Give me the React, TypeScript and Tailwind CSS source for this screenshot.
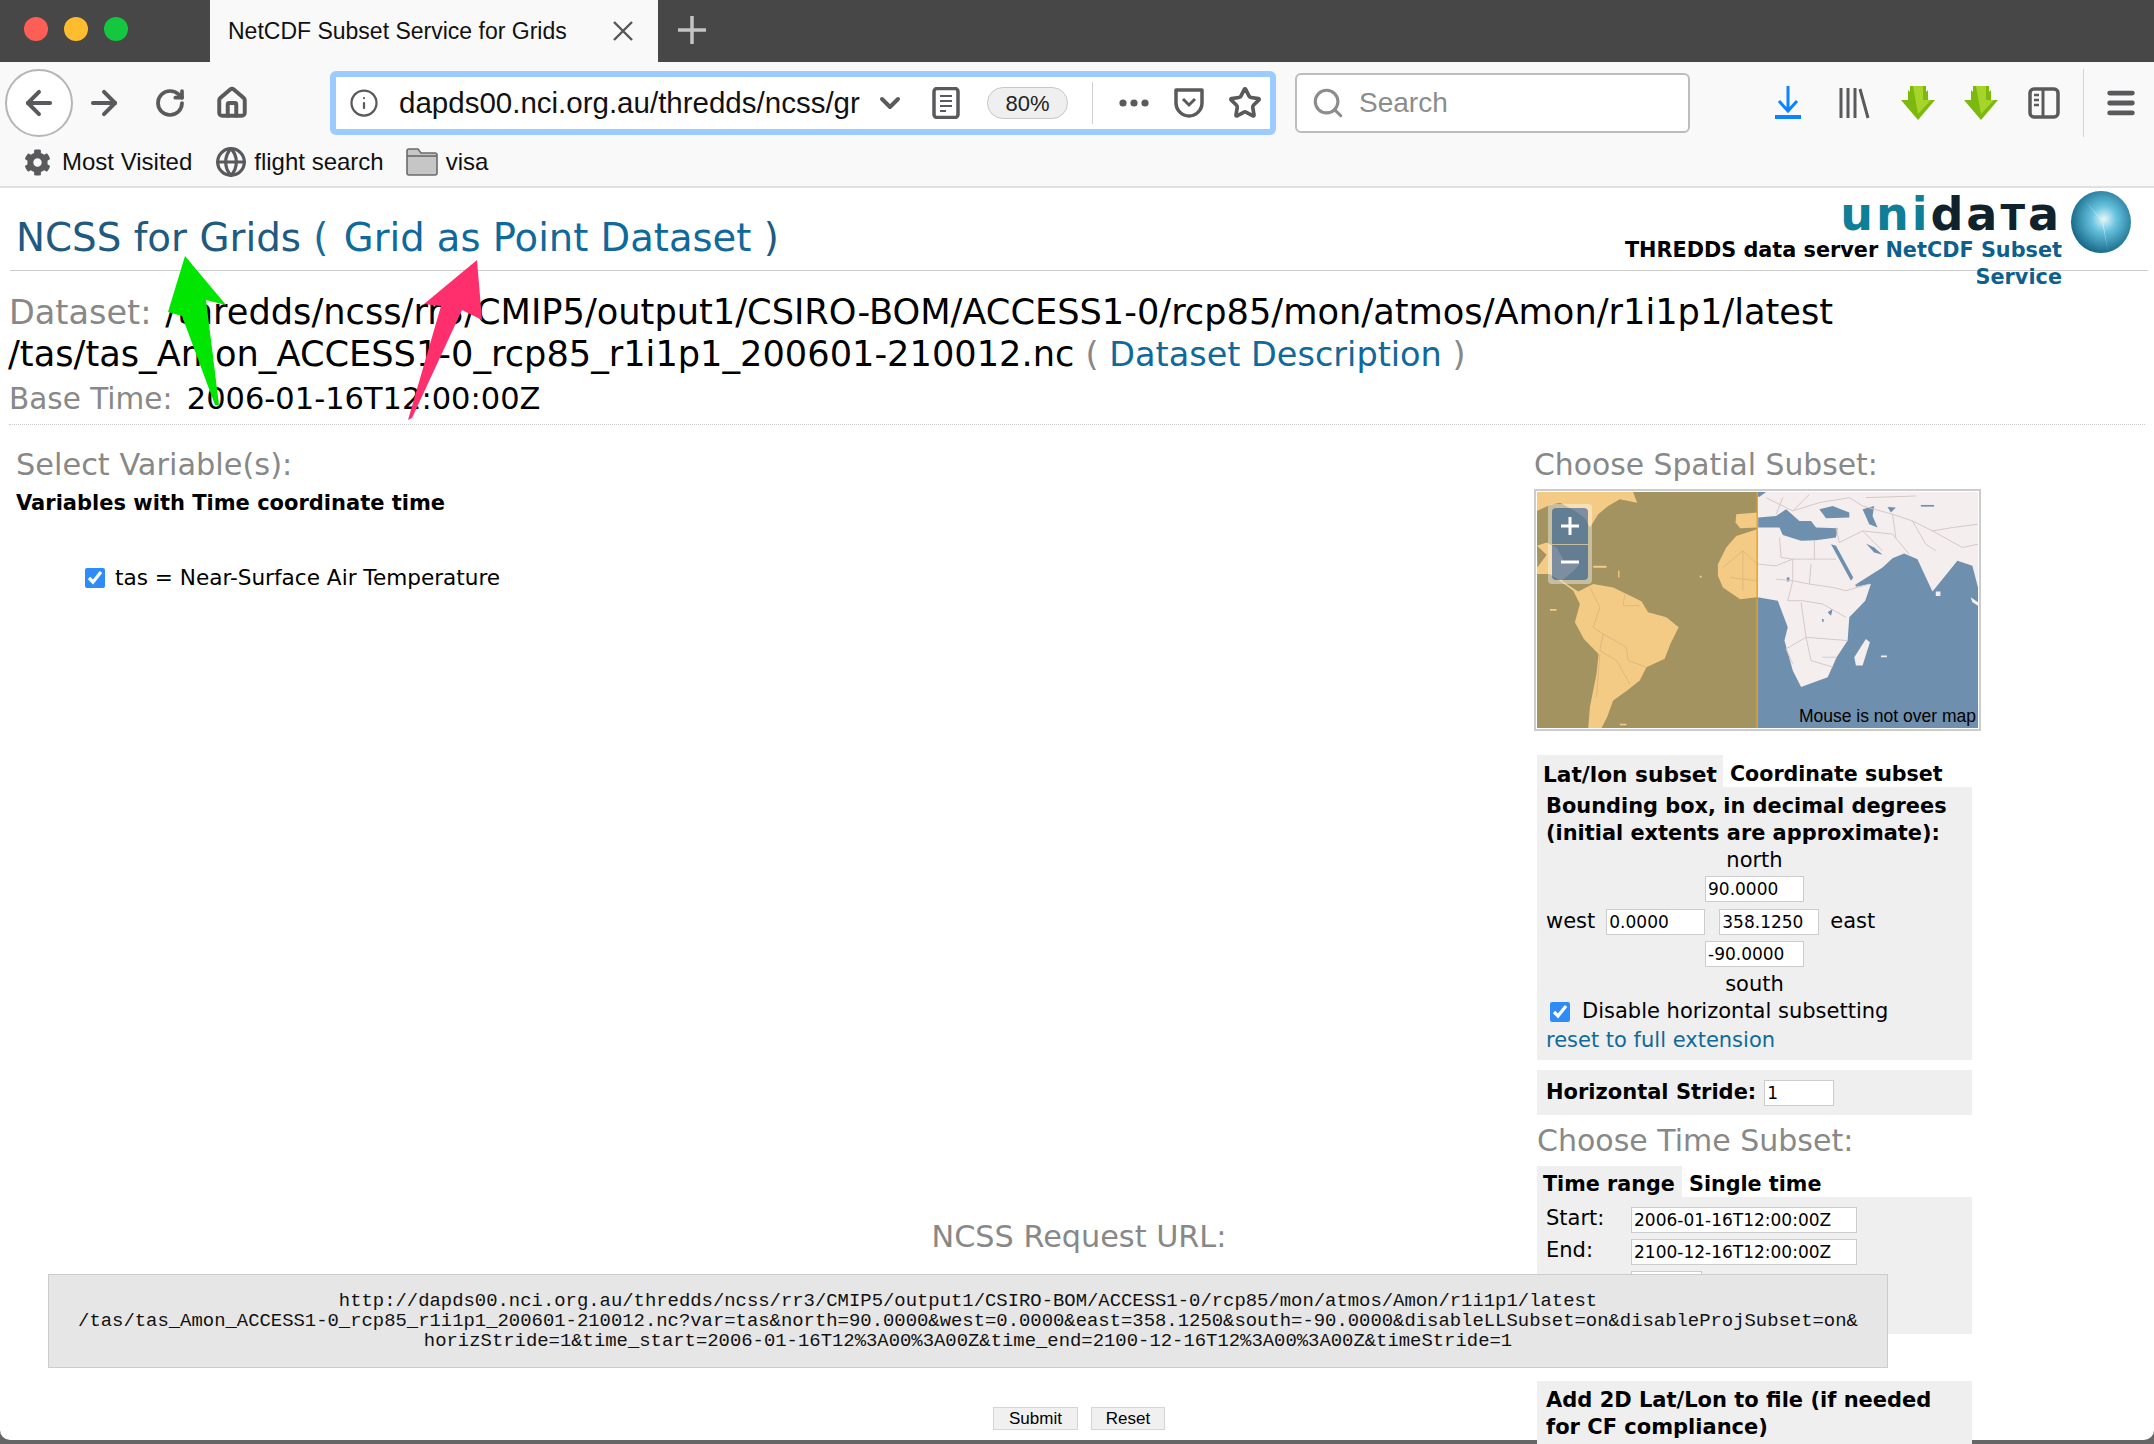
import React from "react";
import { ArrowLeft, ArrowRight, RotateCw, Home, Info, ChevronDown, Star, Search, Menu, Globe } from "lucide-react";
import { FaCog } from "react-icons/fa";

const GreenArrow = () => (
  <svg className="h-[34px] w-[36px]" viewBox="0 0 36 34">
    <path d="M10 0h16v6l2-2v10h7L18 34 1 14h7V4l2 2z" fill="#7cb80e" />
    <path d="M13 0h10v14h8L18 28z" fill="#a6d42a" />
  </svg>
);

const MapPicture = () => (
  <svg className="h-full w-full" viewBox="111 183 1326 710" preserveAspectRatio="none">
    <rect x="111" y="183" width="663" height="710" fill="#a29360" />
    <rect x="774" y="183" width="663" height="710" fill="#6f8fae" />
    {/* americas + west africa, dimmed half */}
    <g fill="#f4cb85">
      <path d="M111 183H400L412 215L360 205L325 225L295 250L270 290L255 262L225 240L180 215L150 222L111 240Z" />
      <path d="M111 345L140 335L170 350L195 395L240 398L222 420L185 450L235 482L280 460L340 470L385 492L425 512L445 545L500 560L537 590L512 640L495 685L440 710L420 750L382 780L340 810L322 860L305 893H265L270 830L290 730L296 670L252 625L225 575L240 520L220 480L180 450L150 430H111Z" />
      <path d="M710 250L773 245V290L722 292L708 275Z" />
      <path d="M655 400L680 350L710 315L773 295V500L722 506L670 470L655 435Z" />
      <path d="M280 405h40v6h-40zM600 435h6v5h-6zM355 420h4v20h-4zM150 535h20v5h-20z" />
      <path d="M111 345L140 372L112 410Z" fill="#a29360" />
      <path d="M360 880h20v5h-20z" />
    </g>
    <g fill="none" stroke="#e0b87c" strokeWidth="3">
      <path d="M270 470L300 530L280 590L310 610L380 650L385 690L440 710M310 610L300 660L350 690L390 760M375 490L370 525L420 525M670 410L730 360L773 400M690 440L773 450M730 360V480M300 670L290 800" />
    </g>
    {/* europe, africa, asia */}
    <path
      d="M774 183H1437V470L1420 405L1375 390L1310 470L1300 482L1255 385L1215 368L1180 382L1150 410L1068 462L1115 460L1098 510L1050 560L1045 630L1012 680L985 740L905 770L880 720L855 630L865 590L835 510L774 500Z"
      fill="#f5eeee"
    />
    <path d="M1065 680L1100 625L1112 635L1090 705L1070 705Z" fill="#f5eeee" />
    <path d="M1415 500L1437 515V525L1420 515ZM1310 482h14v14h-14zM1145 675h18v5h-18z" fill="#f5eeee" />
    <g fill="#6f8fae">
      <path d="M776 260L830 255L860 235L900 270L935 270L950 290L1015 292L1010 320L950 328L905 330L850 312L840 290L776 290Z" />
      <path d="M960 235L1000 225L1050 245L1050 260L980 262Z" />
      <path d="M1090 235L1125 225L1120 255L1135 290L1110 280Z" />
      <path d="M1165 228L1190 230L1175 245Z" />
      <path d="M995 340L1010 345L1062 440L1055 450Z" />
      <path d="M1100 338L1125 350L1150 372L1125 365Z" />
      <path d="M1068 462L1115 455L1112 460L1070 468Z" />
      <path d="M985 545L1000 535L995 555ZM968 565h5v8h-5z" />
      <path d="M1265 222H1305V227H1265Z" />
      <path d="M774 183H800L780 197H774Z" />
      <path d="M862 440h8v12h-8z" />
    </g>
    <g fill="none" stroke="#d6c8c8" strokeWidth="3">
      <path d="M840 320L845 380L880 385L945 385L1010 385M945 330V385M880 385V450L930 460L1000 470L1040 480L1110 460M930 460L935 400M774 400L830 405L880 385M830 445L880 450L865 510L910 510L970 520L1040 560M905 515L920 620L1045 630M920 620L860 655L880 700M970 680L1010 680M920 620L935 690L1000 710" />
      <path d="M800 200L880 240L960 215L1050 200L1090 225L1180 250L1240 270L1300 300L1390 350L1437 340M1020 335L1090 300L1180 310L1230 370M1180 250L1190 320M1240 270L1280 340L1310 360M1100 200L1250 195M1300 300L1360 290L1437 280M880 240L930 190M1020 335L1010 290M1090 300L1150 360M850 200L830 250" />
    </g>
    <rect x="771" y="183" width="4" height="710" fill="#e79f1a" />
  </svg>
);

const fieldBox = "h-[26px] border border-[#cccccc] bg-white px-[2px] text-[17px] leading-[24px] text-black";

const App = () => {
  return (
    <div className="relative h-[1444px] w-[2154px] overflow-hidden bg-[#666666] font-['Liberation_Sans',sans-serif]">
      {/* tab strip */}
      <div className="flex h-[62px] bg-[#474747]">
        <div className="flex w-[210px] items-center gap-[16px] pb-[4px] pl-[24px]">
          <span className="h-[24px] w-[24px] rounded-full bg-[#fd5f57]" />
          <span className="h-[24px] w-[24px] rounded-full bg-[#febc2e]" />
          <span className="h-[24px] w-[24px] rounded-full bg-[#14c73f]" />
        </div>
        <div className="flex w-[448px] items-center justify-between bg-[#f9f9fa] pl-[18px] pr-[24px] text-[23px] text-[#111111]">
          <span>NetCDF Subset Service for Grids</span>
          <svg className="h-[22px] w-[22px]" viewBox="0 0 22 22">
            <path d="M2 2l18 18M20 2L2 20" stroke="#555555" strokeWidth="2.4" />
          </svg>
        </div>
        <svg className="ml-[20px] mt-[16px] h-[28px] w-[28px]" viewBox="0 0 28 28">
          <path d="M14 0v28M0 14h28" stroke="#c4c4c4" strokeWidth="3.5" />
        </svg>
      </div>

      {/* toolbar */}
      <div className="flex h-[78px] items-center bg-[#f9f9fa] pt-[4px] text-[#5a5a5c]">
        <div className="ml-[5px] flex h-[68px] w-[68px] items-center justify-center rounded-full border-2 border-[#b5b5b5] bg-white">
          <ArrowLeft size={38} strokeWidth={2.5} />
        </div>
        <ArrowRight size={38} strokeWidth={2.5} className="ml-[12px]" />
        <RotateCw size={32} strokeWidth={2.8} className="ml-[31px]" />
        <Home size={34} strokeWidth={2.8} className="ml-[29px]" />
        <div className="ml-[81px] flex h-[64px] w-[946px] items-center rounded-[6px] border-[6px] border-[#9ccbff] bg-white">
          <Info size={30} strokeWidth={1.8} className="ml-[13px]" />
          <div className="ml-[20px] w-[461px] overflow-hidden whitespace-nowrap text-[29.5px] text-[#111111]">
            dapds00.nci.org.au/thredds/ncss/grid/CMIP5
          </div>
          <ChevronDown size={32} strokeWidth={3} className="ml-[14px]" />
          <svg className="ml-[26px] h-[32px] w-[28px]" viewBox="0 0 28 32">
            <rect x="2" y="1.5" width="24" height="29" rx="3" fill="none" stroke="#5a5a5c" strokeWidth="3.5" />
            <path d="M8 9h12M8 14h12M8 19h12M8 24h6" stroke="#5a5a5c" strokeWidth="2" />
          </svg>
          <div className="ml-[27px] flex h-[32px] w-[81px] items-center justify-center rounded-full border border-[#c8c8c8] bg-[#efefef] text-[22px] text-[#222222]">
            80%
          </div>
          <div className="ml-[24px] h-[42px] w-px bg-[#cfcfcf]" />
          <svg className="ml-[24px] h-[34px] w-[34px]" viewBox="0 0 34 34">
            <circle cx="6" cy="17" r="3.6" fill="#5a5a5c" />
            <circle cx="17" cy="17" r="3.6" fill="#5a5a5c" />
            <circle cx="28" cy="17" r="3.6" fill="#5a5a5c" />
          </svg>
          <svg className="ml-[22px] h-[32px] w-[32px]" viewBox="0 0 32 32">
            <path d="M3 3h26v13c0 7-6 13-13 13S3 23 3 16z" fill="none" stroke="#5a5a5c" strokeWidth="3.5" strokeLinejoin="round" />
            <path d="M10 12l6 6 6-6" fill="none" stroke="#5a5a5c" strokeWidth="3" />
          </svg>
          <Star size={34} strokeWidth={2.6} className="ml-[23px]" />
        </div>
        <div className="ml-[19px] flex h-[60px] w-[395px] items-center rounded-[6px] border-2 border-[#bdbdbd] bg-white text-[28px] text-[#8c8c8c]">
          <Search size={34} strokeWidth={2.2} className="ml-[14px]" />
          <span className="ml-[14px]">Search</span>
        </div>
        <svg className="ml-[85px] h-[34px] w-[26px]" viewBox="0 0 26 34">
          <path d="M13 0v25M4 15l9 10 9-10" fill="none" stroke="#0a84ff" strokeWidth="3" />
          <path d="M0 31h26" stroke="#0a84ff" strokeWidth="4" />
        </svg>
        <svg className="ml-[37px] h-[32px] w-[32px]" viewBox="0 0 32 32">
          <path d="M3 1v30M10 1v30M17 1v30M22 2l8 29" stroke="#5a5a5c" strokeWidth="3" />
        </svg>
        <div className="ml-[30px]">
          <GreenArrow />
        </div>
        <div className="ml-[27px]">
          <GreenArrow />
        </div>
        <svg className="ml-[29px] h-[32px] w-[32px]" viewBox="0 0 32 32">
          <rect x="2" y="2" width="28" height="28" rx="4" fill="none" stroke="#5a5a5c" strokeWidth="3.5" />
          <path d="M15 2v28" stroke="#5a5a5c" strokeWidth="3" />
          <path d="M6 8h5M6 13h5M6 18h5" stroke="#5a5a5c" strokeWidth="2.5" />
        </svg>
        <div className="ml-[23px] h-[68px] w-px bg-[#d4d4d4]" />
        <Menu size={34} strokeWidth={3.4} className="ml-[20px]" />
      </div>

      {/* bookmarks */}
      <div className="flex h-[48px] items-center border-b-2 border-[#e0e0e0] bg-[#f9f9fa] pb-[2px] pl-[24px] text-[24px] text-[#111111]">
        <FaCog size={27} className="text-[#5a5a5c]" />
        <span className="ml-[11px]">Most Visited</span>
        <Globe size={32} strokeWidth={2.4} className="ml-[23px] text-[#5a5a5c]" />
        <span className="ml-[7px]">flight search</span>
        <svg className="ml-[22px] h-[28px] w-[32px]" viewBox="0 0 32 28">
          <path d="M1 3a2 2 0 0 1 2-2h9l3 4h14a2 2 0 0 1 2 2v18a2 2 0 0 1-2 2H3a2 2 0 0 1-2-2z" fill="#c6c6c6" stroke="#6a6a6a" strokeWidth="1.6" />
          <path d="M1 8h30" stroke="#6a6a6a" strokeWidth="1.6" />
        </svg>
        <span className="ml-[8px]">visa</span>
      </div>

      {/* page */}
      <div className="relative h-[1252px] rounded-b-[10px] bg-white font-['DejaVu_Sans',sans-serif] text-black">
        {/* logo block sits over the rule */}
        <div className="absolute right-[22px] top-[2px] flex items-start gap-[8px]">
          <div className="flex w-[440px] flex-col items-end">
            <div className="mt-[-2px] h-[49px] whitespace-nowrap text-[46px] leading-[52px] tracking-[3px]">
              <span className="font-bold text-[#0f7e97]">uni</span>
              <span className="font-bold text-[#10222b]">
                da<span className="text-[36px] uppercase">t</span>a
              </span>
            </div>
            <div className="text-right text-[20.8px] font-bold leading-[27px]">
              THREDDS data server <span className="text-[#0f5f8c]">NetCDF Subset Service</span>
            </div>
          </div>
          <svg className="h-[64px] w-[62px]" viewBox="0 0 62 64">
            <defs>
              <radialGradient id="globe" cx="0.55" cy="0.45" r="0.6">
                <stop offset="0" stopColor="#e8f6fb" />
                <stop offset="0.35" stopColor="#66c2de" />
                <stop offset="1" stopColor="#0d5f80" />
              </radialGradient>
            </defs>
            <ellipse cx="31" cy="32" rx="30" ry="31" fill="url(#globe)" />
            <path d="M14 10L32 30L38 62L33 32Z" fill="#ffffff" opacity="0.8" />
          </svg>
        </div>

        <div className="ml-[10px] mr-[6px] border-b border-[#cccccc] pb-[6px] pl-[6px] pt-[24px] text-[38.8px] leading-[52px] text-[#215a80]">
          NCSS for Grids <span className="text-[#1c6b97]">( </span>
          <span className="ml-[3px] text-[38.5px] text-[#10699b]">Grid as Point Dataset</span> <span>)</span>
        </div>

        <div className="mx-[9px] mt-[20px] border-b border-dotted border-[#cccccc] pb-[2px] text-[35.2px] leading-[41px]">
          <div>
            <span className="mr-[3px] text-[33.5px] text-[#888888]">Dataset: </span>
            /thredds/ncss/rr3/CMIP5/output1/CSIRO-BOM/ACCESS1-0/rcp85/mon/atmos/Amon/r1i1p1/latest
          </div>
          <div className="ml-[-1px]">
            /tas/tas_Amon_ACCESS1-0_rcp85_r1i1p1_200601-210012.nc <span className="text-[33.5px] text-[#888888]">( </span>
            <span className="text-[33.5px] text-[#10699b]">Dataset Description</span>
            <span className="text-[33.5px] text-[#888888]"> )</span>
          </div>
          <div className="pt-px text-[30.5px] leading-[46px]">
            <span className="mr-[5px] text-[29.5px] text-[#888888]">Base Time: </span>2006-01-16T12:00:00Z
          </div>
        </div>

        <div className="flex">
          {/* left column */}
          <div className="w-[1534px] pl-[16px] pt-[21px]">
            <div className="text-[30.4px] leading-[38px] text-[#888888]">Select Variable(s):</div>
            <div className="mt-[4px] text-[21px] font-bold leading-[30px]">Variables with Time coordinate time</div>
            <label className="ml-[69px] mt-[45px] flex items-center gap-[10px] text-[21.6px] leading-[30px]">
              <input type="checkbox" defaultChecked className="h-[20px] w-[20px] accent-[#2f8cf7]" />
              tas = Near-Surface Air Temperature
            </label>
          </div>

          {/* right column */}
          <div className="w-[450px] pt-[21px]">
            <div className="text-[29.8px] leading-[38px] text-[#888888]">Choose Spatial Subset:</div>
            <div className="relative mt-[5px] h-[242px] w-[447px] border-2 border-[#cccccc] p-px">
              <MapPicture />
              <div className="absolute left-[12px] top-[13px] flex h-[80px] w-[44px] flex-col gap-px rounded-[4px] bg-[#ffffff66] p-[4px]">
                <div className="flex flex-1 items-center justify-center rounded-t-[4px] bg-[#003c8880]">
                  <svg className="h-[18px] w-[18px]" viewBox="0 0 18 18">
                    <path d="M9 0v18M0 9h18" stroke="#ffffff" strokeWidth="3" />
                  </svg>
                </div>
                <div className="flex flex-1 items-center justify-center rounded-b-[4px] bg-[#003c8880]">
                  <svg className="h-[18px] w-[18px]" viewBox="0 0 18 18">
                    <path d="M0 9h18" stroke="#ffffff" strokeWidth="3" />
                  </svg>
                </div>
              </div>
              <div className="absolute bottom-[3px] right-[3px] font-['Liberation_Sans',sans-serif] text-[17.5px] leading-[20px] text-black">
                Mouse is not over map
              </div>
            </div>

            <div className="ml-[3px] mt-[24px] w-[435px]">
              <div className="flex">
                <div className="h-[32px] w-[186px] bg-[#efefef] pl-[6px] pt-[6px] text-[21.7px] font-bold leading-[27px]">Lat/lon subset</div>
                <div className="h-[32px] pl-[7px] pt-[6px] text-[20.6px] font-bold leading-[27px]">Coordinate subset</div>
              </div>
              <div className="h-[273px] bg-[#efefef] px-[9px] pt-[6px] text-[21px] leading-[27px]">
                <div className="text-[20.9px] font-bold">
                  Bounding box, in decimal degrees (initial extents are approximate):
                </div>
                <div className="mb-[2px] text-center">north</div>
                <div className={`${fieldBox} mx-auto w-[99px] text-left`}>90.0000</div>
                <div className="mt-[6px] flex items-center">
                  <span>west</span>
                  <span className={`${fieldBox} ml-[11px] w-[99px]`}>0.0000</span>
                  <span className={`${fieldBox} ml-[14px] w-[100px]`}>358.1250</span>
                  <span className="ml-[11px]">east</span>
                </div>
                <div className={`${fieldBox} mx-auto mt-[6px] w-[99px]`}>-90.0000</div>
                <div className="mt-[4px] text-center">south</div>
                <label className="flex h-[27px] items-center gap-[12px] pl-[4px]">
                  <input type="checkbox" defaultChecked className="h-[20px] w-[20px] accent-[#2f8cf7]" />
                  Disable horizontal subsetting
                </label>
                <div className="mt-[2px] text-[#10699b]">reset to full extension</div>
              </div>
              <div className="mt-[10px] flex h-[45px] items-center gap-[8px] bg-[#efefef] px-[9px] text-[21px]">
                <span className="font-bold">Horizontal Stride:</span>
                <span className={`${fieldBox} w-[70px]`}>1</span>
              </div>
              <div className="mt-[7px] text-[30px] leading-[38px] text-[#888888]">Choose Time Subset:</div>
              <div className="mt-[6px] flex">
                <div className="h-[31px] w-[145px] bg-[#efefef] pl-[6px] pt-[5px] text-[20.7px] font-bold leading-[27px]">Time range</div>
                <div className="h-[31px] pl-[7px] pt-[5px] text-[20.7px] font-bold leading-[27px]">Single time</div>
              </div>
              <div className="h-[137px] bg-[#efefef] px-[9px] pt-[10px] text-[21px] leading-[26px]">
                <div className="flex">
                  <span className="mt-[-2px] w-[85px]">Start:</span>
                  <span className={`${fieldBox} w-[226px]`}>2006-01-16T12:00:00Z</span>
                </div>
                <div className="mt-[6px] flex">
                  <span className="mt-[-2px] w-[85px]">End:</span>
                  <span className={`${fieldBox} w-[226px]`}>2100-12-16T12:00:00Z</span>
                </div>
                <div className="mt-[6px] flex">
                  <span className="w-[85px]">Stride:</span>
                  <span className={`${fieldBox} w-[71px]`}>1</span>
                </div>
              </div>
              <div className="mt-[47px] bg-[#efefef] px-[9px] pb-[10px] pt-[6px] text-[21px] font-bold leading-[27px]">
                Add 2D Lat/Lon to file (if needed for CF compliance)
              </div>
            </div>
          </div>
        </div>

        {/* request url bar floats over the form */}
        <div className="absolute left-[48px] top-[1030px] w-[1840px]">
          <div className="pl-[222px] text-center text-[30.3px] leading-[38px] text-[#888888]">NCSS Request URL:</div>
          <div className="mt-[18px] h-[94px] border border-[#cccccc] bg-[#e6e6e6] pt-[16px] text-center font-['Liberation_Mono',monospace] text-[18.9px] leading-[20px] text-[#111111]">
            http://dapds00.nci.org.au/thredds/ncss/rr3/CMIP5/output1/CSIRO-BOM/ACCESS1-0/rcp85/mon/atmos/Amon/r1i1p1/latest
            <br />
            /tas/tas_Amon_ACCESS1-0_rcp85_r1i1p1_200601-210012.nc?var=tas&amp;north=90.0000&amp;west=0.0000&amp;east=358.1250&amp;south=-90.0000&amp;disableLLSubset=on&amp;disableProjSubset=on&amp;
            <br />
            horizStride=1&amp;time_start=2006-01-16T12%3A00%3A00Z&amp;time_end=2100-12-16T12%3A00%3A00Z&amp;timeStride=1
          </div>
          <div className="mt-[39px] flex justify-center gap-[13px] pl-[222px] font-['Liberation_Sans',sans-serif] text-[17px]">
            <span className="flex h-[23px] w-[85px] items-center justify-center border border-[#d5d5d5] bg-[#f0f0f0]">Submit</span>
            <span className="flex h-[23px] w-[74px] items-center justify-center border border-[#d5d5d5] bg-[#f0f0f0]">Reset</span>
          </div>
        </div>

        {/* annotation arrows */}
        <svg className="absolute left-0 top-[-188px] h-[1440px] w-[2154px]" viewBox="0 0 2154 1440">
          <path d="M185 256L226 305L206 300L219 405L215 405L182 316L168 312Z" fill="#00e600" />
          <path d="M477 260L482 320L462 310L412 418L408 420L441 306L424 304Z" fill="#ff2f6d" />
        </svg>
      </div>
    </div>
  );
};

export default App;
